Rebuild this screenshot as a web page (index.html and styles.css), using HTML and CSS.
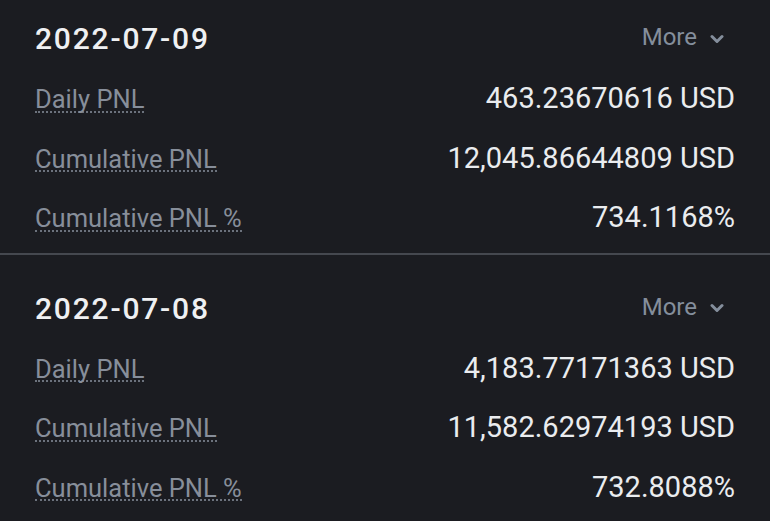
FILE: index.html
```html
<!DOCTYPE html>
<html lang="en">
  <head>
    <meta charset="UTF-8" />
    <meta name="viewport" content="width=device-width, initial-scale=1.0" />
    <title>PNL History</title>
    <link rel="stylesheet" href="styles.css">
  </head>
  <body>
    <div class="day first">
      <div class="head">
        <span class="date">2022-07-09</span>
        <span class="more">More
          <svg width="14" height="10" viewBox="0 0 14 10"><path d="M2 2.5 L7 7.5 L12 2.5" fill="none" stroke="#848e9c" stroke-width="3" stroke-linecap="round" stroke-linejoin="round"/></svg>
        </span>
      </div>
      <div class="row"><span class="label">Daily PNL</span><span class="value">463.23670616 USD</span></div>
      <div class="row"><span class="label">Cumulative PNL</span><span class="value">12,045.86644809 USD</span></div>
      <div class="row"><span class="label">Cumulative PNL %</span><span class="value">734.1168%</span></div>
    </div>
    <div class="day">
      <div class="head">
        <span class="date">2022-07-08</span>
        <span class="more">More
          <svg width="14" height="10" viewBox="0 0 14 10"><path d="M2 2.5 L7 7.5 L12 2.5" fill="none" stroke="#848e9c" stroke-width="3" stroke-linecap="round" stroke-linejoin="round"/></svg>
        </span>
      </div>
      <div class="row"><span class="label">Daily PNL</span><span class="value">4,183.77171363 USD</span></div>
      <div class="row"><span class="label">Cumulative PNL</span><span class="value">11,582.62974193 USD</span></div>
      <div class="row"><span class="label">Cumulative PNL %</span><span class="value">732.8088%</span></div>
    </div>
  </body>
</html>
```

FILE: styles.css
```css
body {
  margin: 0;
  background: #1b1c21;
  font-family: Roboto, "Liberation Sans", sans-serif;
  overflow: hidden;
}

.day {
  padding: 0 35px 5px;
  border-bottom: 2px solid #45484f;
}
.head {
  display: flex;
  justify-content: space-between;
  align-items: center;
  padding: 36px 0 12px;
  line-height: 36px;
}
.day.first .head {
  padding-top: 21px;
}
.date {
  font-size: 30px;
  font-weight: 500;
  letter-spacing: 1.8px;
  color: #eff0f2;
}
.more {
  display: flex;
  align-items: center;
  align-self: flex-start;
  font-size: 24px;
  color: #848e9c;
  margin: -2px 11px 0 0;
}
.more svg {
  margin-left: 13px;
  margin-top: 3px;
}

.row {
  display: flex;
  justify-content: space-between;
  align-items: baseline;
  height: 59.5px;
  line-height: 59.5px;
}
.label {
  font-size: 25.5px;
  color: #878e9a;
  line-height: 0.85;
  border-bottom: 2px dotted #6c727d;
}
.value {
  font-size: 29px;
  color: #eaecef;
}
```
